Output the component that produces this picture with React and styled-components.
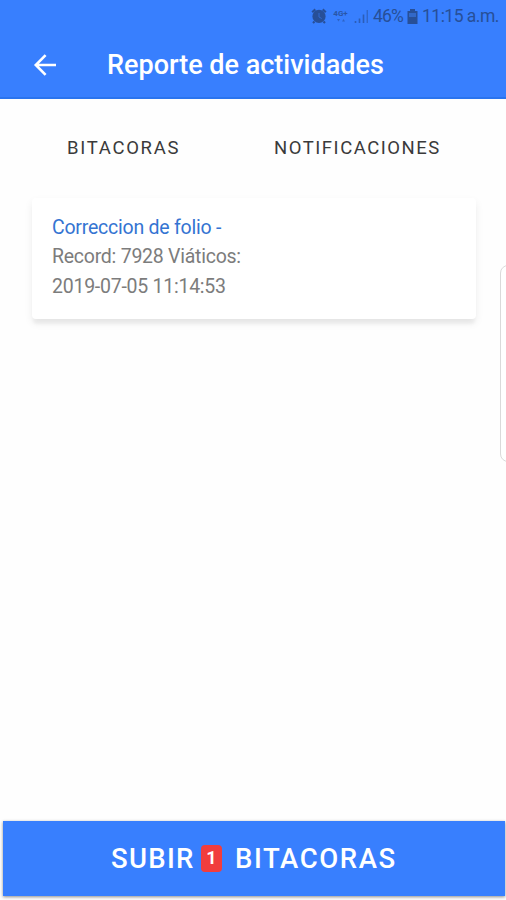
import React from "react";
import styled, { createGlobalStyle } from "styled-components";

const GlobalStyle = createGlobalStyle`
  *, *::before, *::after { box-sizing: border-box; }
  body { margin: 0; background: #fefefe; font-family: Roboto, sans-serif; }
`;

const Screen = styled.div`
  position: relative;
  display: flex;
  flex-direction: column;
  width: 506px;
  height: 900px;
  overflow: hidden;
  background: #fefefe;
`;

const Header = styled.header`
  display: flex;
  flex-direction: column;
  height: 99px;
  flex: none;
  background: #387ffe;
  border-bottom: 2px solid #2a74ee;
`;

const StatusBar = styled.div`
  display: flex;
  align-items: center;
  height: 32px;
  padding-left: 311px;
  color: #274f98;
  white-space: nowrap;
`;

const StatusText = styled.span`
  width: ${(p) => p.$width}px;
  margin-left: ${(p) => p.$gap}px;
  font-size: 17.5px;
  line-height: 32px;
  letter-spacing: ${(p) => p.$spacing}px;
`;

const StatusIcon = styled.svg`
  display: block;
  flex: none;
  margin-left: ${(p) => p.$gap || 0}px;
`;

const Network = styled.div`
  display: flex;
  flex-direction: column;
  align-items: center;
  width: 17px;
  margin-left: 5px;
  font-size: 8px;
  font-weight: 700;
  line-height: 8px;
  opacity: 0.85;
`;

const TitleBar = styled.div`
  display: flex;
  align-items: center;
  height: 66px;
  padding-left: 33px;
`;

const BackButton = styled.button`
  display: block;
  width: 24px;
  height: 24px;
  padding: 0;
  border: 0;
  background: none;
`;

const Title = styled.h1`
  margin: 0 0 0 50px;
  color: #fff;
  font-size: 27px;
  font-weight: 500;
  line-height: 36px;
  letter-spacing: 0;
  white-space: nowrap;
`;

const Tabs = styled.nav`
  display: flex;
  height: 98px;
  flex: none;
`;

const Tab = styled.button`
  width: ${(p) => p.$width}px;
  padding: 0 0 0 ${(p) => p.$inset}px;
  border: 0;
  background: none;
  color: #3a3a3a;
  font: 400 18.5px/98px Roboto, sans-serif;
  letter-spacing: ${(p) => p.$spacing}px;
  text-align: left;
`;

const Card = styled.article`
  width: 444px;
  height: 121px;
  flex: none;
  margin: 1px 0 0 32px;
  padding: 15px 20px;
  border-radius: 4px;
  background: #fff;
  box-shadow: 0 6px 3px -1px rgba(0, 0, 0, 0.04), 0 4px 8px rgba(0, 0, 0, 0.07);
`;

const CardTitle = styled.h2`
  margin: 0;
  color: #3474d2;
  font-size: 19.5px;
  font-weight: 400;
  line-height: 30px;
  letter-spacing: -0.23px;
`;

const CardText = styled.p`
  margin: 0;
  color: #7c7c7c;
  font-size: 19.5px;
  line-height: ${(p) => p.$line}px;
  letter-spacing: -0.25px;
`;

const EdgeHandle = styled.div`
  position: absolute;
  top: 265px;
  right: -12px;
  width: 18px;
  height: 197px;
  border: 1px solid #dadada;
  border-radius: 8px;
  background: #fff;
`;

const UploadButton = styled.button`
  display: flex;
  align-items: center;
  width: 502px;
  height: 75px;
  margin: auto 0 4px 3px;
  padding: 0 0 0 108px;
  border: 0;
  background: #387ffe;
  box-shadow: 0 1px 3px rgba(0, 0, 0, 0.45);
  color: #fff;
  font: 500 27.5px/36px Roboto, sans-serif;
  text-align: left;
  white-space: nowrap;
`;

const ButtonWord = styled.span`
  width: ${(p) => p.$width || "auto"};
  letter-spacing: ${(p) => p.$spacing}px;
`;

const Badge = styled.span`
  width: 21px;
  height: 27px;
  margin-right: 13px;
  border-radius: 4px;
  background: #f13d3d;
  font-size: 18px;
  font-weight: 700;
  line-height: 25px;
  letter-spacing: 0;
  text-align: center;
`;

export default function App() {
  return (
    <Screen>
      <GlobalStyle />
      <Header>
        <StatusBar>
          <StatusIcon width="16" height="16" viewBox="0 0 16 16">
            <circle cx="8" cy="8.4" r="6.6" fill="currentColor" />
            <path d="M1.2 4.2 4.3 1.4M14.8 4.2l-3.1-2.8M3.5 13.5 2 15M12.5 13.5 14 15" stroke="currentColor" strokeWidth="2.2" />
            <path d="M8 5v4l2.7 1.5" stroke="#316bd0" strokeWidth="1" fill="none" />
          </StatusIcon>
          <Network>
            <span>4G+</span>
            <StatusIcon width="10" height="4" viewBox="0 0 10 4">
              <path d="M1 1h3L2.5 3.5zM6 3.5h3L7.5 1z" fill="currentColor" opacity=".65" />
            </StatusIcon>
          </Network>
          <StatusIcon $gap={5} width="15" height="15" viewBox="0 0 15 15">
            <path d="M1.5 12v2M5.5 9.5V14M9.5 5.5V14" stroke="currentColor" strokeWidth="1.6" opacity=".7" />
            <path d="M13.3 1v13" stroke="currentColor" strokeWidth="1.4" opacity=".5" />
          </StatusIcon>
          <StatusText $gap={4} $width={31} $spacing={-0.8}>46%</StatusText>
          <StatusIcon $gap={3} width="11" height="15" viewBox="0 0 11 15">
            <path d="M3 0h5v2h2.5v13H.5V2H3z" fill="currentColor" />
            <path d="M2 4h7v4H2z" fill="#3268c8" />
          </StatusIcon>
          <StatusText $gap={4} $width={78} $spacing={-0.52}>11:15 a.m.</StatusText>
        </StatusBar>
        <TitleBar>
          <BackButton aria-label="Volver">
            <svg width="24" height="24" viewBox="0 0 24 24" fill="none" stroke="#fff" strokeWidth="2.6">
              <path d="M12.6 2.2 2.8 12l9.8 9.8M2.8 12H23" />
            </svg>
          </BackButton>
          <Title>Reporte de actividades</Title>
        </TitleBar>
      </Header>
      <Tabs>
        <Tab $width={253} $inset={67} $spacing={1.7}>BITACORAS</Tab>
        <Tab $width={253} $inset={21} $spacing={1.52}>NOTIFICACIONES</Tab>
      </Tabs>
      <Card>
        <CardTitle>Correccion de folio -</CardTitle>
        <CardText $line={27}>Record: 7928 Viáticos:</CardText>
        <CardText $line={33}>2019-07-05 11:14:53</CardText>
      </Card>
      <EdgeHandle />
      <UploadButton>
        <ButtonWord $width="90px" $spacing={1.3}>SUBIR</ButtonWord>
        <Badge>1</Badge>
        <ButtonWord $spacing={1.6}>BITACORAS</ButtonWord>
      </UploadButton>
    </Screen>
  );
}
